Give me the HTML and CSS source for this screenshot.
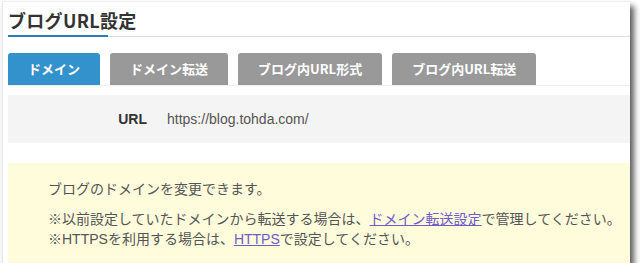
FILE: index.html
```html
<!DOCTYPE html>
<html lang="ja">
<head>
<meta charset="utf-8">
<title>ブログURL設定</title>
<link rel="stylesheet" href="styles.css">
</head>
<body>
<div class="card">
  <div class="header">
    <h1 class="title">ブログURL設定</h1>
    <div class="rule"></div>
  </div>
  <div class="tabs">
    <span class="tab active">ドメイン</span>
    <span class="tab">ドメイン転送</span>
    <span class="tab">ブログ内URL形式</span>
    <span class="tab">ブログ内URL転送</span>
  </div>
  <div class="url-row">
    <span class="label">URL</span>
    <span class="value">https://blog.tohda.com/</span>
  </div>
  <div class="notice">
    <p class="lead">ブログのドメインを変更できます。</p>
    <p class="notes">※以前設定していたドメインから転送する場合は、<a href="#">ドメイン転送設定</a>で管理してください。<br>※HTTPSを利用する場合は、<a href="#">HTTPS</a>で設定してください。</p>
  </div>
</div>
</body>
</html>
```

FILE: styles.css
```css
html, body {
  margin: 0;
  padding: 0;
  background: #ffffff;
}
body {
  font-family: "Liberation Sans", "Noto Sans CJK JP", sans-serif;
  color: #333;
}
.card {
  box-sizing: border-box;
  width: 628px;
  height: 262px;
  margin: 1px 0 0 2px;
  padding-left: 5px;
  border-top: 1px solid #eeeeee;
  border-left: 1px solid #e8e8e8;
  background: #ffffff;
  box-shadow: 4px 5px 6px rgba(0, 0, 0, 0.65);
  display: flex;
  flex-direction: column;
  overflow: hidden;
}
.header {
  padding-top: 6px;
}
.title {
  margin: 0;
  font-family: "Noto Sans CJK JP", sans-serif;
  font-size: 18px;
  font-weight: 700;
  line-height: 25px;
  color: #333;
  letter-spacing: 0.3px;
}
.rule {
  margin-top: 2px;
  height: 2px;
  background:
    linear-gradient(#2b7db9, #2b7db9) 0 0 / 100px 2px no-repeat,
    linear-gradient(#dddddd, #dddddd) 0 1px / 100% 1px no-repeat;
}
.tabs {
  display: flex;
  gap: 10px;
  margin-top: 16px;
  border-bottom: 1px solid #eeeeee;
}
.tab {
  height: 32px;
  line-height: 32px;
  padding: 0 20px;
  border-radius: 3px 3px 0 0;
  background: #999999;
  color: #ffffff;
  font-family: "Noto Sans CJK JP", sans-serif;
  font-size: 13px;
  font-weight: 700;
}
.tab.active {
  background: #3391cb;
}
.url-row {
  display: flex;
  align-items: center;
  height: 48px;
  margin-top: 9px;
  background: #f4f4f4;
  font-size: 14px;
}
.label {
  width: 139px;
  text-align: right;
  font-weight: 700;
  color: #333;
}
.value {
  margin-left: 20px;
  color: #555;
}
.notice {
  flex: 1;
  margin-top: 20px;
  padding: 16px 0 0 40px;
  background: #fffcdc;
  color: #555;
  font-size: 14px;
  line-height: 20px;
}
.notice p {
  margin: 0;
}
.notice .notes {
  margin-top: 10px;
}
.notice a {
  color: #6e5ccc;
  text-decoration: underline;
}
```
